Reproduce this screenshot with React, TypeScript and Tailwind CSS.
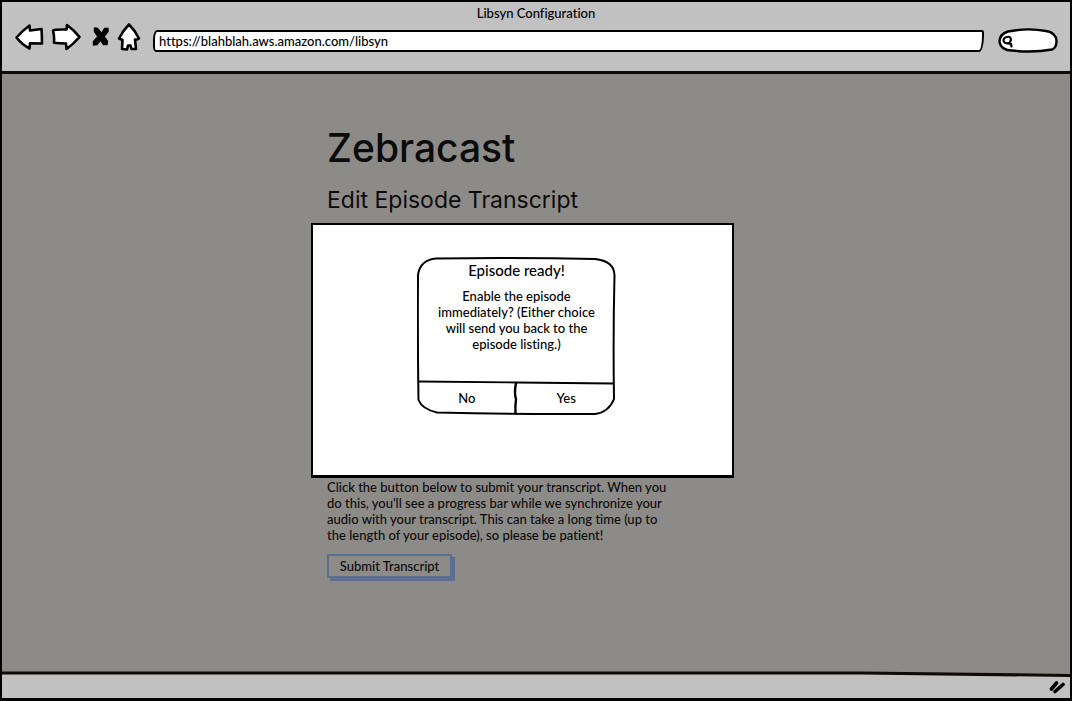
import React from "react";

function BackIcon() {
  return (
    <svg width="30" height="28" viewBox="0 0 30 28" fill="white" stroke="black" strokeWidth="2.6" strokeLinejoin="round" aria-hidden="true">
      <path d="M2.500 14.500 Q8 8 15.500 2.500 L16 7.500 L27.500 6 Q28 13 28 20.500 L16 20.300 L15.500 25.500 Q8 21.500 2.500 14.500 Z" />
    </svg>
  );
}

function ForwardIcon() {
  return (
    <svg width="30" height="28" viewBox="0 0 30 28" fill="white" stroke="black" strokeWidth="2.6" strokeLinejoin="round" aria-hidden="true">
      <path d="M2 7.500 Q3 6.300 15.500 6.500 L16 2 Q23 7 28.500 14 Q22.500 21 15.500 26 L15 20.500 Q8 20.500 3 19.800 Q3.500 13 2 7.500 Z" />
    </svg>
  );
}

function StopIcon() {
  return (
    <svg width="18" height="20" viewBox="0 0 18 20" fill="black" stroke="black" strokeWidth="1.4" strokeLinejoin="round" aria-hidden="true">
      <path d="M2.500 1 L5.500 1.500 L9.500 6.500 L12.500 1.500 L16 1.500 L16 4.500 L12 9.500 L15.500 14.500 L15 17.500 L11.500 17.500 L8.500 13 L5 17.500 L1.500 18 L1.500 14.500 L6 9.500 L2.500 4.500 Z" />
    </svg>
  );
}

function HomeIcon() {
  return (
    <svg width="24" height="28" viewBox="0 0 24 28" fill="white" stroke="black" strokeWidth="2.6" strokeLinejoin="round" aria-hidden="true">
      <path d="M12 1.500 Q18.500 8 22 15.500 Q20 17 18 16.500 L19 26 L14.500 26 L13.500 22.500 L11 22.500 L10 26.500 L5 26 L5.500 17 L2 15.500 Q6 7.500 12 1.500 Z" />
    </svg>
  );
}

function SearchIcon() {
  return (
    <svg width="13" height="14" viewBox="0 0 13 14" fill="none" stroke="black" strokeWidth="2.2" strokeLinecap="round" aria-hidden="true">
      <path d="M5 3 C8 2 9.500 4.500 8.500 7 C7.500 10 3 10 1.800 7.500 C1 5.500 2.500 3 5 3 Z M6 9.500 L9 10 L9.500 12.500" />
    </svg>
  );
}

function SearchOutline() {
  return (
    <svg className="absolute inset-0 size-full" viewBox="0 0 60 25" preserveAspectRatio="none" fill="white" stroke="black" strokeWidth="2.4" aria-hidden="true">
      <path d="M10 3.500 Q30 -0.500 48 3 Q58 4.500 58.500 13 Q58.500 20 54 21.500 Q35 25 14 22.500 Q3 22.500 1.500 14 Q1.500 6 10 3.500 Z" />
    </svg>
  );
}

function DialogOutline() {
  return (
    <svg className="pointer-events-none absolute inset-0 size-full" viewBox="0 0 199 158" preserveAspectRatio="none" fill="none" stroke="black" strokeWidth="2" strokeLinecap="round" aria-hidden="true">
      <path d="M19 1.500 Q100 0.500 178 2 Q197 4 197.500 18 Q196 80 197 142 Q192 155 178 157 Q100 157.500 20 155.500 Q5 152 1.500 143 Q0.500 80 1 18 Q3 3 19 1.500 Z" />
      <path d="M2 124.500 L100 125.500 L196 126.500" strokeWidth="1.8" />
      <path d="M99 126 Q97 136 99 142 Q98 150 98.500 156" strokeWidth="2.4" />
    </svg>
  );
}

function TitleBar() {
  return (
    <header className="h-[72px] border-b-[3px] border-[#0b0b09] bg-[#c1c1c1] pl-3 pr-3">
      <h1 className="h-6 text-center text-[13px] leading-[22px]">Libsyn Configuration</h1>
      <div className="-mt-1.5 flex items-center">
        <nav className="flex h-8 items-center gap-[7px]" aria-label="Browser">
          <button type="button" aria-label="Back"><BackIcon /></button>
          <button type="button" aria-label="Forward"><ForwardIcon /></button>
          <button type="button" aria-label="Stop" className="ml-1"><StopIcon /></button>
          <button type="button" aria-label="Home"><HomeIcon /></button>
        </nav>
        <input
          aria-label="Address"
          defaultValue="https://blahblah.aws.amazon.com/libsyn"
          className="ml-3 mt-2 h-[22px] min-w-0 flex-1 rounded-[4px_2px_5px_3px/10px_3px_16px_6px] border-2 border-black bg-white px-1 text-[13px] outline-none"
        />
        <label className="relative ml-3.5 mt-2 flex h-[25px] w-[60px] items-center pl-1">
          <SearchOutline />
          <span className="relative"><SearchIcon /></span>
          <input aria-label="Search" type="search" className="relative min-w-0 flex-1 bg-transparent outline-none" />
        </label>
      </div>
    </header>
  );
}

function ReadyDialog() {
  return (
    <section
      role="dialog"
      aria-labelledby="ready-title"
      className="relative flex h-[158px] w-[199px] flex-col text-center"
    >
      <DialogOutline />
      <h3 id="ready-title" className="pt-px text-[15px] leading-6">Episode ready!</h3>
      <p className="mt-1.5 flex-1 text-[13px] leading-4">
        Enable the episode<br />
        immediately? (Either choice<br />
        will send you back to the<br />
        episode listing.)
      </p>
      <div className="grid h-8 grid-cols-2 text-[13px]">
        <button type="button">No</button>
        <button type="button">Yes</button>
      </div>
    </section>
  );
}

export default function App() {
  return (
    <div className="flex min-h-screen flex-col border-2 border-b-[3px] border-black bg-[#8d8b88] font-['Lato',sans-serif] font-medium text-black [font-variant-ligatures:none]">
      <TitleBar />
      <main className="mx-auto w-[450px] flex-1 pt-12 text-[#0c0b0b]">
        <h2 className="pl-4 font-['Inter',sans-serif] text-[39px] leading-[52px]">Zebracast</h2>
        <h3 className="pl-4 pt-2 font-['Inter',sans-serif] text-[23px] font-normal leading-9">Edit Episode Transcript</h3>
        <div className="mt-[5px] flex h-[255px] w-[423px] items-start justify-center border-2 border-b-[3px] border-black bg-white pr-3 pt-8 text-black">
          <ReadyDialog />
        </div>
        <p className="mt-px pl-4 text-[13px] leading-4">
          Click the button below to submit your transcript. When you<br />
          do this, you'll see a progress bar while we synchronize your<br />
          audio with your transcript. This can take a long time (up to<br />
          the length of your episode), so please be patient!
        </p>
        <button
          type="button"
          className="ml-4 mt-[11px] h-6 w-[125px] border-2 border-[#5c6f8e] text-[13px] leading-5 shadow-[3px_3px_0_#5c6f8e]"
        >
          Submit Transcript
        </button>
      </main>
      <footer className="relative flex h-[27px] items-center justify-end pr-1">
        <svg className="absolute inset-0 size-full" viewBox="0 0 1068 27" preserveAspectRatio="none" aria-hidden="true">
          <path d="M0 2 L860 2 L1068 4.500 V27 H0 Z" fill="#c1c1c1" />
          <path d="M0 2 L860 2 L1068 4.500" fill="none" stroke="#0f0b08" strokeWidth="3" />
        </svg>
        <svg className="relative mt-1" width="17" height="14" viewBox="0 0 17 14" stroke="black" strokeWidth="3.6" strokeLinecap="round" aria-hidden="true">
          <path d="M2.500 9 L7.500 3 M6 11.500 L14 4.500" />
        </svg>
      </footer>
    </div>
  );
}
